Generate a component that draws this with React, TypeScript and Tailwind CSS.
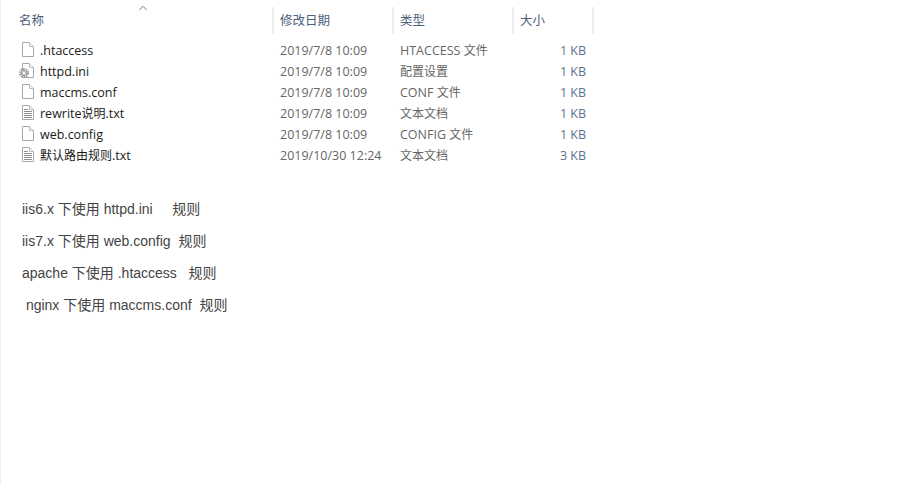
import { ChevronUp } from "lucide-react";

const files = [
  { name: ".htaccess", date: "2019/7/8 10:09", type: "HTACCESS 文件", size: "1 KB", icon: "blank" },
  { name: "httpd.ini", date: "2019/7/8 10:09", type: "配置设置", size: "1 KB", icon: "gear" },
  { name: "maccms.conf", date: "2019/7/8 10:09", type: "CONF 文件", size: "1 KB", icon: "blank" },
  { name: "rewrite说明.txt", date: "2019/7/8 10:09", type: "文本文档", size: "1 KB", icon: "text" },
  { name: "web.config", date: "2019/7/8 10:09", type: "CONFIG 文件", size: "1 KB", icon: "blank" },
  { name: "默认路由规则.txt", date: "2019/10/30 12:24", type: "文本文档", size: "3 KB", icon: "text" },
];

const notes = [
  "iis6.x 下使用 httpd.ini     规则",
  "iis7.x 下使用 web.config  规则",
  "apache 下使用 .htaccess   规则",
  " nginx 下使用 maccms.conf  规则",
];

function Label({ text }: { text: string }) {
  return (
    <span>
      {text.split(/([\u4e00-\u9fff]+)/).map((part, i) =>
        i % 2 === 1 ? (
          <span key={i} className="text-[12px]">
            {part}
          </span>
        ) : (
          part
        )
      )}
    </span>
  );
}

function FileIcon({ kind }: { kind: string }) {
  return (
    <svg width="16" height="16" viewBox="0 0 16 16" className="shrink-0 mt-[-1px]">
      <path d="M3.5 .5h7l4 4v10h-11z" fill="#fff" stroke="#a8a8a8" />
      <path d="M10.5 .5v4h4" fill="#f2f2f2" stroke="#bdbdbd" />
      {kind === "text" && (
        <path d="M5 4.5h4M5 6.5h8M5 8.5h8M5 10.5h8M5 12.5h8" stroke="#8f8f8f" strokeWidth="1" />
      )}
      {kind === "gear" && (
        <g>
          <circle cx="5" cy="10" r="4" fill="none" stroke="#8f8f8f" strokeWidth="2" strokeDasharray="1.5 1" />
          <circle cx="5" cy="10" r="2.6" fill="#cfcfcf" stroke="#8f8f8f" strokeWidth="0.8" />
          <circle cx="5" cy="10" r="1" fill="#fff" />
        </g>
      )}
    </svg>
  );
}

export default function App() {
  return (
    <div className="w-[900px] h-[485px] bg-white overflow-hidden border-l border-[#f0f0f0] text-[12.5px] font-['Open_Sans','Noto_Sans_CJK_SC',sans-serif]">
      <div className="relative flex h-[27px] mt-[7px] ml-[-1px] text-[#4c607a]">
        <ChevronUp size={14} strokeWidth={1.3} className="absolute left-[136px] top-[-6px] text-[#555]" />
        <div className="w-[274px] pl-[19px] leading-[27px] border-r-2 border-[#eeeeee]">名称</div>
        <div className="w-[120px] pl-[6px] leading-[27px] border-r-2 border-[#eeeeee]">修改日期</div>
        <div className="w-[120px] pl-[6px] leading-[27px] border-r-2 border-[#eeeeee]">类型</div>
        <div className="w-[80px] pl-[6px] leading-[27px] border-r-2 border-[#eeeeee]">大小</div>
      </div>

      <div className="mt-[6px] ml-[-1px]">
        {files.map((f) => (
          <div key={f.name} className="flex h-[21px] items-center leading-[21px]">
            <div className="w-[274px] pl-[19px] flex items-center gap-[5px] text-[#1a1a1a]">
              <FileIcon kind={f.icon} />
              <Label text={f.name} />
            </div>
            <div className="w-[120px] pl-[6px] text-[#666666]">{f.date}</div>
            <div className="w-[120px] pl-[6px] text-[#666666]">
              <Label text={f.type} />
            </div>
            <div className="w-[72px] text-right text-[#5b7390]">{f.size}</div>
          </div>
        ))}
      </div>

      <div className="mt-[33px] ml-[21px] flex flex-col gap-[12px] text-[14px] leading-[20px] text-[#444444] whitespace-pre font-['Liberation_Sans','Noto_Sans_CJK_SC',sans-serif]">
        {notes.map((n) => (
          <p key={n}>{n}</p>
        ))}
      </div>
    </div>
  );
}
